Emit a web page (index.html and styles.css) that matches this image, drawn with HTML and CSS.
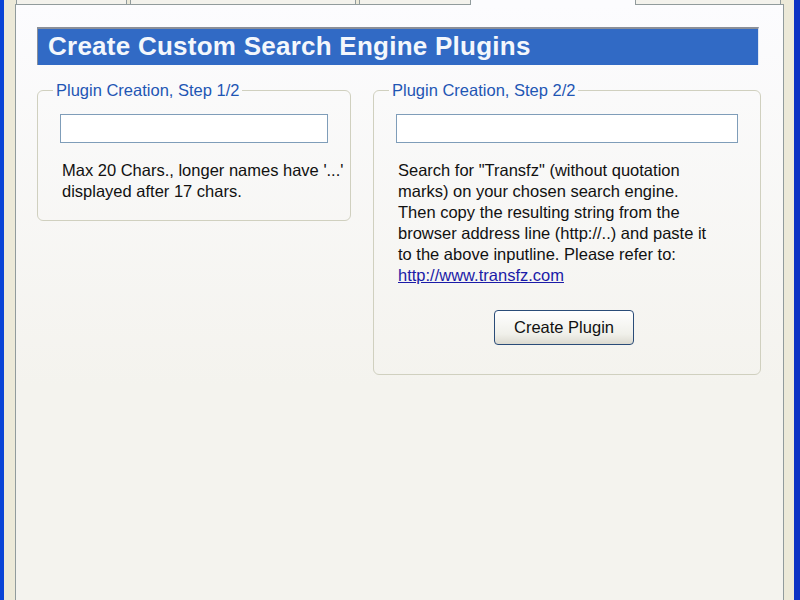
FILE: index.html
```html
<!DOCTYPE html>
<html lang="en">
  <head>
    <meta charset="UTF-8" />
    <title>Create Custom Search Engine Plugins</title>
    <link rel="stylesheet" href="styles.css">
  </head>
  <body>
    <div class="tabs">
      <div class="tab tab-1"></div>
      <div class="tab tab-2"></div>
      <div class="tab tab-3"></div>
      <div class="tab tab-4 active"></div>
      <div class="tab tab-5"></div>
    </div>
    <main class="panel">
      <h1 class="title">Create Custom Search Engine Plugins</h1>
      <div class="steps">
        <fieldset class="group group-1">
          <legend>Plugin Creation, Step 1/2</legend>
          <input type="text" class="field">
          <p class="hint">Max 20 Chars., longer names have '...'<br>displayed after 17 chars.</p>
        </fieldset>
        <fieldset class="group group-2">
          <legend>Plugin Creation, Step 2/2</legend>
          <input type="text" class="field">
          <p class="hint">Search for "Transfz" (without quotation<br>marks) on your chosen search engine.<br>Then copy the resulting string from the<br>browser address line (http://..) and paste it<br>to the above inputline. Please refer to:<br><a href="#">http://www.transfz.com</a></p>
          <div class="actions">
            <button class="btn">Create Plugin</button>
          </div>
        </fieldset>
      </div>
    </main>
  </body>
</html>
```

FILE: styles.css
```css
* {
  box-sizing: border-box;
}
html, body {
  height: 100%;
}
body {
  margin: 0;
  padding: 0 10px 0 11px;
  display: flex;
  flex-direction: column;
  background: #ece9d8;
  border-left: 4px solid #0a44d6;
  border-right: 6px solid #0d33c4;
  font-family: "Liberation Sans", Arial, sans-serif;
  font-size: 16.5px;
  color: #111;
  overflow: hidden;
}
.tabs {
  display: flex;
  height: 5px;
  border-bottom: 1px solid #919b9c;
  padding-left: 1px;
}
.tab {
  height: 4px;
  background: #f3f2ec;
  border: 1px solid #919b9c;
  border-top: none;
  border-bottom: none;
  margin-right: 3px;
}
.tab-1 { width: 112px; }
.tab-2 { width: 227px; }
.tab-3 { width: 112px; margin-right: 0; }
.tab-4 { width: 165px; margin-right: 0; }
.tab-5 { width: 147px; }
.tab.active {
  height: 5px;
  background: #fcfcfe;
  border: none;
}
.panel {
  flex: 1;
  border-left: 1px solid #919b9c;
  border-right: 1px solid #919b9c;
  background: linear-gradient(#fcfcfe, #f4f3ee 380px);
  padding: 22px 22px 0 21px;
}
.title {
  margin: 0 2px 0 0;
  height: 38px;
  background: #316ac5;
  border-top: 2px solid #8a8f98;
  border-left: 1px solid #8a8f98;
  border-right: 1px solid #dfe6f2;
  color: #f4f7fc;
  font-size: 26px;
  font-weight: bold;
  letter-spacing: 0.25px;
  line-height: 34px;
  padding-left: 10px;
  white-space: nowrap;
}
.steps {
  display: flex;
  align-items: flex-start;
  gap: 22px;
  margin-top: 15px;
}
.group {
  flex: none;
  min-width: 0;
  margin: 0;
  padding: 0 22px;
  border: 1px solid #d0d0bf;
  border-radius: 6px;
}
.group-1 {
  width: 314px;
  padding-bottom: 18px;
}
.group-2 {
  width: 388px;
  padding-bottom: 29px;
}
.group legend {
  margin-left: -7px;
  padding: 0 3px;
  color: #1f56b4;
  line-height: 20px;
}
.field {
  display: block;
  width: 100%;
  height: 29px;
  margin-top: 14px;
  border: 1px solid #7f9db9;
  background: #fff;
}
.hint {
  margin: 17px 0 0;
  padding-left: 2px;
  line-height: 21px;
  white-space: nowrap;
}
.hint a {
  color: #1b1ba8;
}
.actions {
  display: flex;
  justify-content: center;
  margin-top: 24px;
  padding-right: 6px;
}
.btn {
  width: 140px;
  height: 35px;
  border: 1px solid #2a4c78;
  border-radius: 4px;
  background: linear-gradient(#ffffff, #f0f0ea 70%, #dcdad0);
  font-family: inherit;
  font-size: 16.5px;
  color: #111;
}
```
